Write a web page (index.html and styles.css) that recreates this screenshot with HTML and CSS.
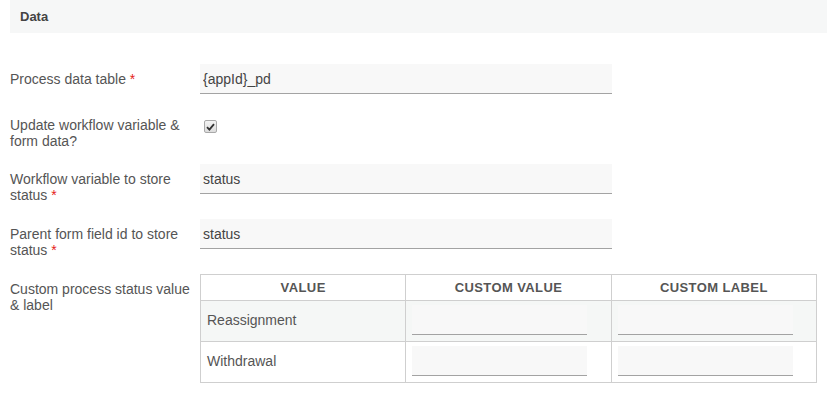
FILE: index.html
```html
<!DOCTYPE html>
<html lang="en">
<head>
  <meta charset="UTF-8" />
  <title>Data</title>
  <link rel="stylesheet" href="styles.css">
</head>
<body>
  <div class="section-header">Data</div>

  <form class="property-form">
    <div class="form-row">
      <label class="form-label">Process data table <span class="required">*</span></label>
      <div class="form-field">
        <input type="text" class="text-input" value="{appId}_pd" />
      </div>
    </div>

    <div class="form-row check-row">
      <label class="form-label">Update workflow variable &amp; form data?</label>
      <div class="form-field">
        <label class="check-wrap">
          <input type="checkbox" class="check-input" checked />
          <span class="check-box">
            <svg width="9" height="8" viewBox="0 0 9 8"><path d="M1 4.2 L3.4 6.6 L8 1.2" fill="none" stroke="#333" stroke-width="1.8"/></svg>
          </span>
        </label>
      </div>
    </div>

    <div class="form-row">
      <label class="form-label">Workflow variable to store status <span class="required">*</span></label>
      <div class="form-field">
        <input type="text" class="text-input" value="status" />
      </div>
    </div>

    <div class="form-row">
      <label class="form-label">Parent form field id to store status <span class="required">*</span></label>
      <div class="form-field">
        <input type="text" class="text-input" value="status" />
      </div>
    </div>

    <div class="form-row">
      <label class="form-label">Custom process status value &amp; label</label>
      <div class="form-field">
        <table class="grid-table">
          <thead>
            <tr>
              <th>Value</th>
              <th>Custom Value</th>
              <th>Custom Label</th>
            </tr>
          </thead>
          <tbody>
            <tr class="striped">
              <td>Reassignment</td>
              <td><input type="text" class="cell-input" /></td>
              <td><input type="text" class="cell-input" /></td>
            </tr>
            <tr>
              <td>Withdrawal</td>
              <td><input type="text" class="cell-input" /></td>
              <td><input type="text" class="cell-input" /></td>
            </tr>
          </tbody>
        </table>
      </div>
    </div>
  </form>
</body>
</html>
```

FILE: styles.css
```css
html, body {
  margin: 0;
  padding: 0;
  font-family: "Liberation Sans", Arial, sans-serif;
  font-size: 14px;
  color: #555;
  background-color: #ffffff;
}

.section-header {
  margin-left: 10px;
  height: 33px;
  line-height: 33px;
  padding-left: 10px;
  background-color: #f6f7f7;
  font-size: 13px;
  font-weight: bold;
  color: #444;
}

.property-form {
  margin: 31px 0 0 10px;
}

.form-row {
  display: flex;
  min-height: 30px;
  margin-bottom: 16px;
}

.form-row.check-row {
  margin-bottom: 15px;
}

.form-label {
  width: 190px;
  flex-shrink: 0;
  box-sizing: border-box;
  padding: 7px 8px 0 0;
  line-height: 16px;
}

.required {
  color: #e52020;
}

.form-field {
  flex: 1;
}

.text-input {
  box-sizing: border-box;
  width: 412px;
  height: 30px;
  padding: 0 3px;
  border: none;
  border-bottom: 1px solid #a3a3a3;
  background-color: #f8f8f8;
  font-family: inherit;
  font-size: 14px;
  color: #444;
  outline: none;
}

.check-wrap {
  display: block;
  padding: 10px 0 0 4px;
}

.check-input {
  display: none;
}

.check-box {
  display: flex;
  align-items: center;
  justify-content: center;
  box-sizing: border-box;
  width: 13px;
  height: 13px;
  border: 1px solid #a9a9a9;
  border-radius: 2px;
  background: linear-gradient(#f4f4f4, #dcdcdc);
}

.grid-table {
  border-collapse: collapse;
  width: 617px;
  table-layout: fixed;
}

.grid-table th,
.grid-table td {
  border: 1px solid #cfcfcf;
}

.grid-table th {
  height: 25px;
  padding: 0;
  font-size: 13px;
  font-weight: bold;
  letter-spacing: 0.4px;
  text-transform: uppercase;
  color: #555;
  text-align: center;
}

.grid-table td {
  height: 30px;
  padding: 4px 6px 6px;
  color: #555;
}

.grid-table tr.striped td {
  background-color: #f5f7f6;
}

.cell-input {
  display: block;
  box-sizing: border-box;
  width: 175px;
  height: 30px;
  border: none;
  border-bottom: 1px solid #a3a3a3;
  background-color: #f8f8f8;
  font-family: inherit;
  font-size: 14px;
  outline: none;
}
```
